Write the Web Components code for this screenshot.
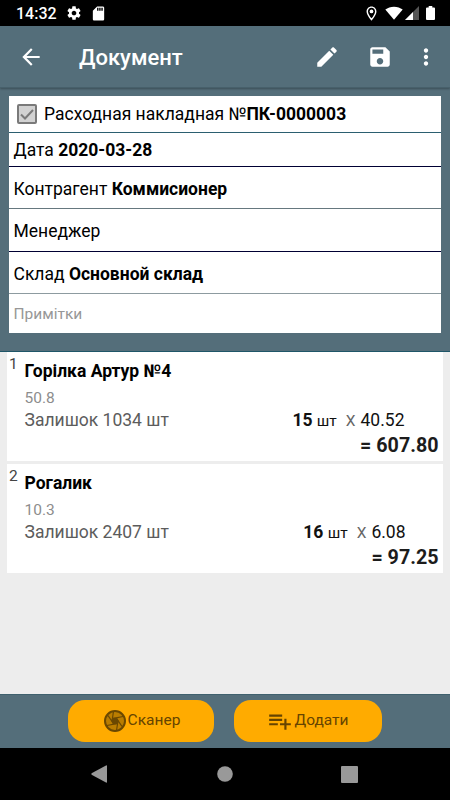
<!DOCTYPE html>
<html lang="uk">
<head>
<meta charset="utf-8">
<title>Документ</title>
<style>
  html, body { margin: 0; height: 100%; }
  body { font-family: Roboto, "Noto Sans", sans-serif; background: #ededed; color: #000; overflow: hidden; }
</style>
</head>
<body>
<document-screen></document-screen>

<script>
function define(name, html, setup) {
  const template = document.createElement('template');
  template.innerHTML = html;
  customElements.define(name, class extends HTMLElement {
    constructor() {
      super();
      this.attachShadow({ mode: 'open' });
      this.shadowRoot.appendChild(template.content.cloneNode(true));
    }
    connectedCallback() {
      if (setup) setup(this, this.shadowRoot);
    }
  });
}

define('status-bar', `
<style>
  :host { display: flex; align-items: center; box-sizing: border-box; height: 26px; padding: 0 15px 0 16px; background: #000; color: #fff; }
  span { font-size: 16px; font-weight: 500; line-height: 20px; width: 50px; padding-top: 1px; }
  svg { display: block; fill: #fff; }
  .gear { width: 16px; height: 16px; }
  .sd { width: 17px; height: 17px; margin-left: 8px; }
  .pin { width: 17px; height: 17px; margin-left: auto; }
  .wifi { width: 18px; height: 14px; margin-left: 5px; }
  .signal { width: 14px; height: 14px; margin-left: 2px; }
  .battery { width: 9px; height: 14px; margin-left: 7px; }
</style>
<span>14:32</span>
<svg class="gear" viewBox="0 0 24 24"><path d="M19.43 12.98c.04-.32.07-.64.07-.98s-.03-.66-.07-.98l2.11-1.65c.19-.15.24-.42.12-.64l-2-3.46c-.12-.22-.39-.3-.61-.22l-2.49 1c-.52-.4-1.08-.73-1.69-.98l-.38-2.65C14.46 2.18 14.25 2 14 2h-4c-.25 0-.46.18-.49.42l-.38 2.65c-.61.25-1.17.59-1.69.98l-2.49-1c-.23-.09-.49 0-.61.22l-2 3.46c-.13.22-.07.49.12.64l2.11 1.65c-.04.32-.07.65-.07.98s.03.66.07.98l-2.11 1.65c-.19.15-.24.42-.12.64l2 3.46c.12.22.39.3.61.22l2.49-1c.52.4 1.08.73 1.69.98l.38 2.65c.03.24.24.42.49.42h4c.25 0 .46-.18.49-.42l.38-2.65c.61-.25 1.17-.59 1.69-.98l2.49 1c.23.09.49 0 .61-.22l2-3.46c.12-.22.07-.49-.12-.64l-2.11-1.65zM12 15.5c-1.93 0-3.5-1.57-3.5-3.5s1.57-3.5 3.5-3.5 3.5 1.57 3.5 3.5-1.57 3.5-3.5 3.5z"/></svg>
<svg class="sd" viewBox="0 0 24 24"><path d="M18 2h-8L4.02 8 4 20c0 1.1.9 2 2 2h12c1.1 0 2-.9 2-2V4c0-1.1-.9-2-2-2zm-6 6h-2V4h2v4zm3 0h-2V4h2v4zm3 0h-2V4h2v4z"/></svg>
<svg class="pin" viewBox="0 0 24 24"><path d="M12 2C8.13 2 5 5.13 5 9c0 5.25 7 13 7 13s7-7.75 7-13c0-3.87-3.13-7-7-7zM7 9c0-2.76 2.24-5 5-5s5 2.24 5 5c0 2.88-2.88 7.19-5 9.88C9.92 16.21 7 11.85 7 9z"/><circle cx="12" cy="9" r="2.6"/></svg>
<svg class="wifi" viewBox="0 0 18 14"><path d="M.3 3.6C2.7 1.7 5.7.7 9 .7s6.3 1 8.7 2.9L9 13.7z"/></svg>
<svg class="signal" viewBox="0 0 14 14"><path fill="#555" d="M14 0v14H0z"/><path d="M8 6v8H0z"/></svg>
<svg class="battery" viewBox="0 0 9 14"><path d="M2.7 0h3.6v1.4H8q1 0 1 1V13q0 1-1 1H1q-1 0-1-1V2.400q0-1 1-1h1.700z"/></svg>
`);

define('tool-bar', `
<style>
  :host { display: flex; align-items: center; box-sizing: border-box; height: 62px; padding: 0 11px 0 18px; background: #546e7a; color: #fff; border-bottom: 1px solid #47606b; box-shadow: 0 1px 2px rgba(0, 0, 0, .3); position: relative; }
  h1 { flex: 1; margin: 0 0 0 35px; font-size: 22px; line-height: 28px; font-weight: 500; padding-top: 2px; }
  svg { width: 26px; height: 26px; fill: #fff; display: block; }
  .save { margin-left: 27px; }
  .more { margin-left: 20px; }
</style>
<svg viewBox="0 0 24 24"><path d="M20 11H7.83l5.59-5.59L12 4l-8 8 8 8 1.41-1.41L7.83 13H20v-2z"/></svg>
<h1><slot></slot></h1>
<svg viewBox="0 0 24 24"><path d="M3 17.25V21h3.75L17.81 9.94l-3.75-3.75L3 17.25zM20.71 7.04c.39-.39.39-1.02 0-1.41l-2.34-2.34c-.39-.39-1.02-.39-1.41 0l-1.83 1.83 3.75 3.75 1.83-1.83z"/></svg>
<svg class="save" viewBox="0 0 24 24"><path d="M17 3H5c-1.11 0-2 .9-2 2v14c0 1.1.89 2 2 2h14c1.1 0 2-.9 2-2V7l-4-4zm-5 16c-1.66 0-3-1.34-3-3s1.34-3 3-3 3 1.34 3 3-1.34 3-3 3zm3-10H5V5h10v4z"/></svg>
<svg class="more" viewBox="0 0 24 24"><path d="M12 8c1.1 0 2-.9 2-2s-.9-2-2-2-2 .9-2 2 .9 2 2 2zm0 2c-1.1 0-2 .9-2 2s.9 2 2 2 2-.9 2-2-.9-2-2-2zm0 6c-1.1 0-2 .9-2 2s.9 2 2 2 2-.9 2-2-.9-2-2-2z"/></svg>
`);

define('doc-field', `
<style>
  :host { display: flex; align-items: center; box-sizing: border-box; height: 42px; padding: 1px 5px 0 4.5px; background: #fff; border-bottom: 1px solid #000033; font-size: 17.5px; white-space: pre; }
  b { font-weight: 700; }
</style>
<slot name="icon"></slot><slot></slot><b></b>
`, (host, root) => {
  root.querySelector('b').textContent = host.getAttribute('value') || '';
});

define('check-box', `
<style>
  :host { display: block; flex: none; width: 20px; height: 20px; margin: 0 7px 0 3.5px; white-space: normal; }
  svg { display: block; }
</style>
<svg width="20" height="20" viewBox="0 0 20 20"><rect x="1" y="1" width="18" height="18" rx="1" fill="#d2d2d2" stroke="#7a7a7a" stroke-width="2"/><path d="M4 10.5l4 4 8-8.5" fill="none" stroke="#7a7a7a" stroke-width="2"/></svg>
`);

define('item-card', `
<style>
  :host { display: grid; grid-template-columns: 17.5px 1fr auto; grid-template-rows: 36px 20px 25px 28px; box-sizing: border-box; height: 109px; padding-right: 4.5px; background: #fff; }
  .num { font-size: 15.5px; line-height: 24px; padding-left: 2px; color: #444; }
  .name { grid-column: 2 / 4; font-size: 17.5px; font-weight: 700; line-height: 38px; }
  .price { grid-column: 2 / 4; font-size: 15.5px; line-height: 20px; color: #8d8d8d; }
  .rest { grid-column: 2; font-size: 17.5px; line-height: 25px; color: #5c5c5c; }
  .qty { font-size: 17.5px; line-height: 25px; color: #111; white-space: pre; }
  .qty i { font-style: normal; font-size: 15.5px; }
  .qty .x { color: #666; margin: 0 5px 0 9px; }
  .sum { grid-column: 2 / 4; text-align: right; font-size: 19.7px; font-weight: 700; line-height: 26px; color: #1c1c1c; }
</style>
<div class="num"></div>
<div class="name"></div>
<div class="price"></div>
<div class="rest"></div>
<div class="qty"><b></b> <i>шт</i><i class="x">X</i><span></span></div>
<div class="sum"></div>
`, (host, root) => {
  const attr = (n) => host.getAttribute(n);
  root.querySelector('.num').textContent = attr('num');
  root.querySelector('.name').textContent = attr('name');
  root.querySelector('.price').textContent = attr('base');
  root.querySelector('.rest').textContent = 'Залишок ' + attr('rest') + ' шт';
  root.querySelector('.qty b').textContent = attr('qty');
  root.querySelector('.qty span').textContent = attr('price');
  root.querySelector('.qty').style.paddingRight = attr('inset') + 'px';
  root.querySelector('.sum').textContent = '= ' + attr('sum');
});

define('action-button', `
<style>
  :host { display: flex; align-items: center; justify-content: center; gap: 1px; box-sizing: border-box; height: 42px; border-radius: 17px; background: #ffab00; color: #664400; font-size: 15.5px; }
  .label { line-height: 20px; padding-bottom: 3px; }
</style>
<slot name="icon"></slot><span class="label"><slot></slot></span>
`);

define('nav-bar', `
<style>
  :host { display: flex; align-items: center; justify-content: space-between; box-sizing: border-box; height: 52px; padding: 0 92px 0 91px; background: #000; }
  svg { display: block; fill: #999; }
</style>
<svg width="16" height="18" viewBox="0 0 16 18"><path d="M16 1v16q0 1-1 .6L.6 9.7Q0 9 .6 8.300L15 .4q1-.4 1 .6z"/></svg>
<svg width="17" height="16" viewBox="0 0 17 16"><circle cx="9" cy="8" r="7.800"/></svg>
<svg width="17" height="17" viewBox="0 0 17 17"><rect width="17" height="17" rx="1"/></svg>
`);

define('document-screen', `
<style>
  :host { display: flex; flex-direction: column; width: 450px; height: 800px; background: #ededed; }
  .fields { box-sizing: border-box; height: 264px; padding: 8px 9px 0; background: #546e7a; border-bottom: 1px solid #1f5668; }
  .head { height: 37px; padding-top: 0; padding-bottom: 1px; border-color: #2b5f70; }
  .date { height: 34px; padding-top: 0; }
  .agent { height: 42px; padding-top: 2px; border-color: #66787f; }
  .manager { height: 43px; }
  .store { height: 42px; padding-top: 2px; border-color: #8d9ba0; }
  .note { height: 39px; border: 0; color: #979797; font-size: 15.5px; }
  .items { flex: 1; display: flex; flex-direction: column; gap: 3px; padding: 0 7px; }
  .actions { display: flex; gap: 20px; box-sizing: border-box; height: 54px; padding: 5px 68px 0; background: #546e7a; border-top: 1px solid #40616e; }
  .scan { width: 146px; padding-left: 1px; }
  .add { width: 148px; }
  svg { display: block; }
</style>
<status-bar></status-bar>
<tool-bar>Документ</tool-bar>
<div class="fields">
  <doc-field class="head" value="ПК-0000003"><check-box slot="icon"></check-box>Расходная накладная №</doc-field>
  <doc-field class="date" value="2020-03-28">Дата </doc-field>
  <doc-field class="agent" value="Коммисионер">Контрагент </doc-field>
  <doc-field class="manager">Менеджер</doc-field>
  <doc-field class="store" value="Основной склад">Склад </doc-field>
  <doc-field class="note">Примітки</doc-field>
</div>
<div class="items">
  <item-card num="1" name="Горілка Артур №4" base="50.8" rest="1034" qty="15" price="40.52" sum="607.80" inset="34"></item-card>
  <item-card num="2" name="Рогалик" base="10.3" rest="2407" qty="16" price="6.08" sum="97.25" inset="33"></item-card>
</div>
<div class="actions">
  <action-button class="scan">
    <svg slot="icon" width="24" height="24" viewBox="0 0 24 24" fill="none" stroke="#6b4800" stroke-width="1.2">
      <circle cx="12" cy="12" r="10" fill="#ba7d00" stroke-width="2"/>
      <path d="M10.500 9.400L20 7.500M13.500 9.400L19 17.500M15 12L13.500 21.500M13.500 14.600L4 16.500M10.500 14.600L5 6.500M9 12L10.500 2.500"/>
      <path fill="#6b4800" d="M10.500 9.400h3L15 12l-1.500 2.600h-3L9 12z"/>
    </svg>Сканер
  </action-button>
  <action-button class="add">
    <svg slot="icon" width="26" height="26" viewBox="0 0 24 24" fill="#664400"><path d="M14 10H2v2h12v-2zm0-4H2v2h12V6zm4 8v-4h-2v4h-4v2h4v4h2v-4h4v-2h-4zM2 16h8v-2H2v2z"/></svg>Додати
  </action-button>
</div>
<nav-bar></nav-bar>
`);
</script>
</body>
</html>
